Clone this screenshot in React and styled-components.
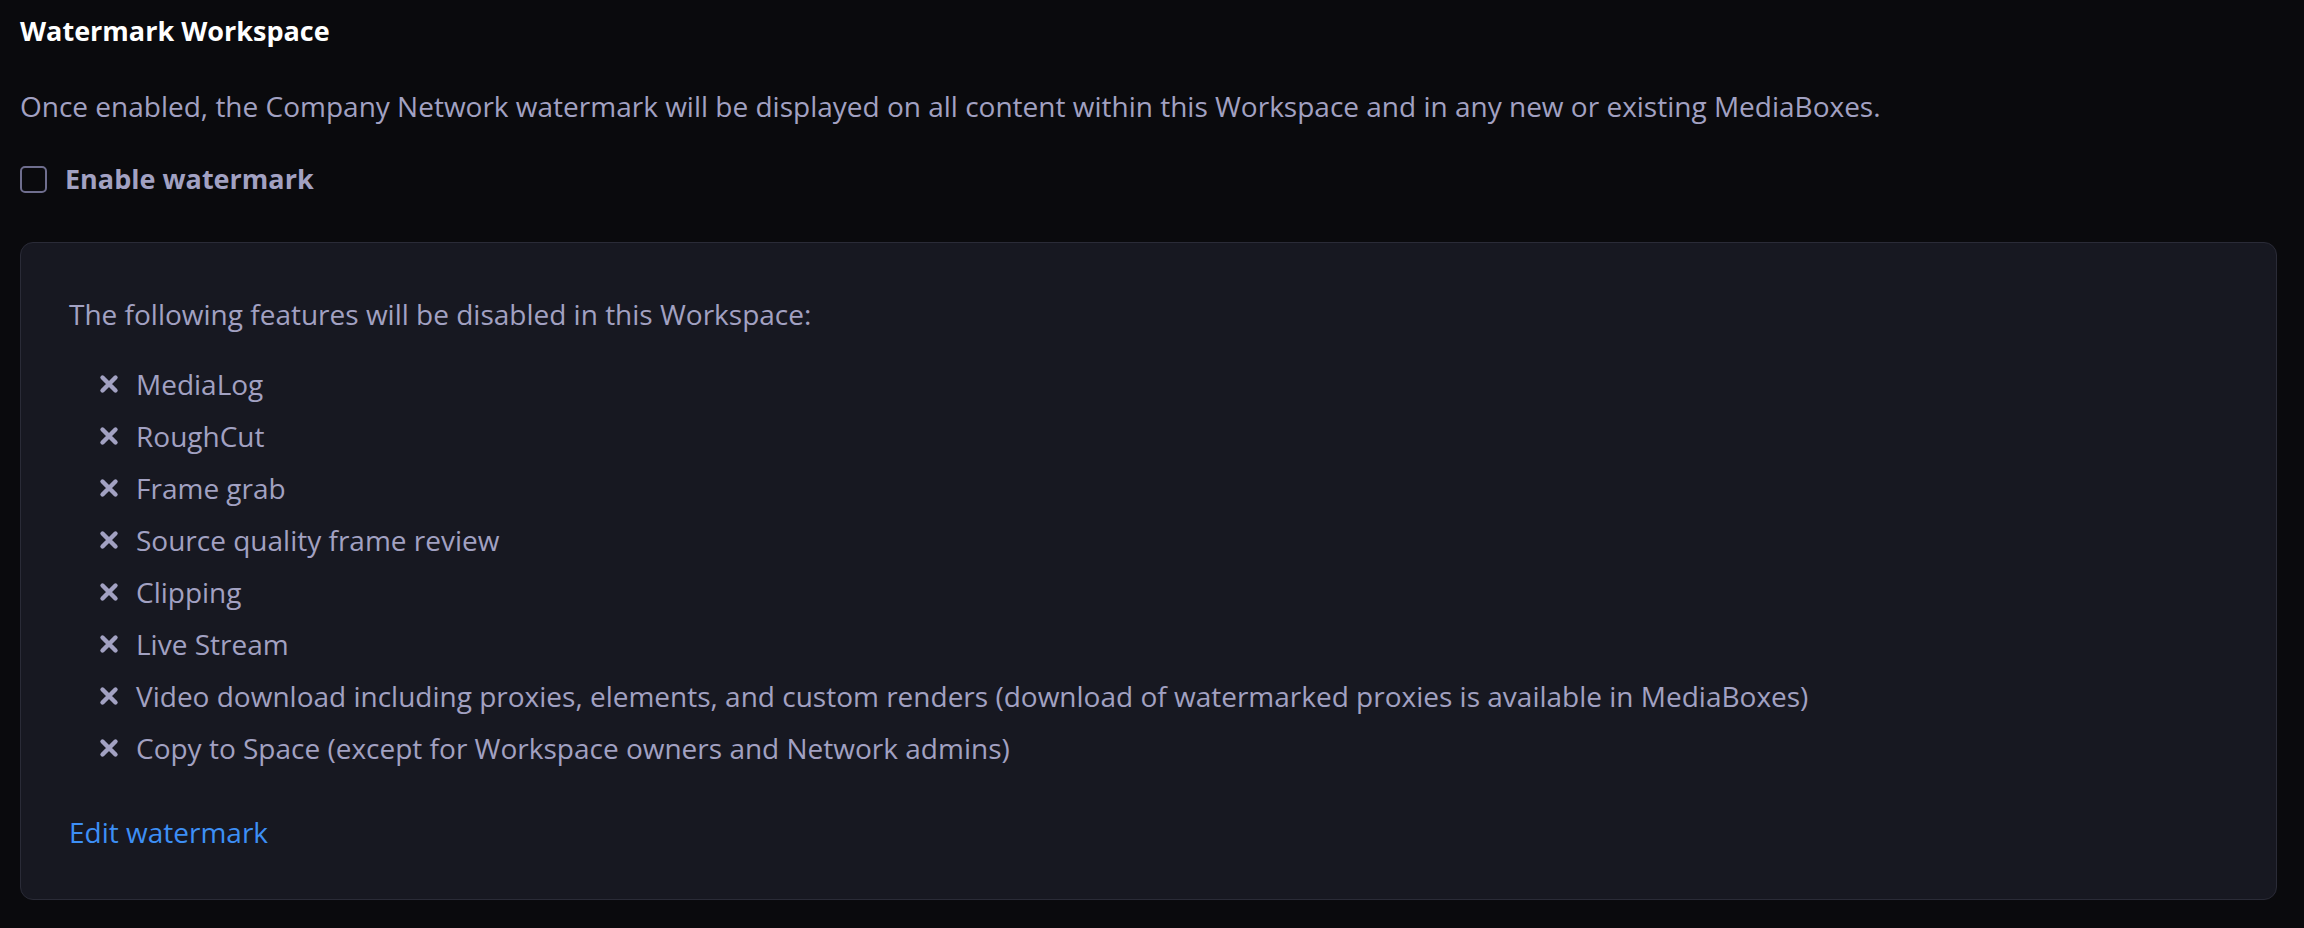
import React from 'react';
import styled, { createGlobalStyle } from 'styled-components';

const GlobalStyle = createGlobalStyle`
  html, body {
    margin: 0;
    padding: 0;
    background-color: #0a0a0d;
  }

  body {
    font-family: "Open Sans", "Noto Sans", sans-serif;
    -webkit-font-smoothing: antialiased;
  }
`;

const Page = styled.div`
  min-height: 928px;
  box-sizing: border-box;
  padding: 13px 27px 29px 20px;
  background-color: #0a0a0d;
  color: #a2a1c2;
`;

const Title = styled.h2`
  margin: 0;
  font-size: 27px;
  line-height: 36px;
  font-weight: 700;
  color: #ffffff;
`;

const Description = styled.p`
  margin: 39px 0 0;
  font-size: 28px;
  line-height: 36px;
  color: #a2a1c2;
`;

const CheckboxRow = styled.label`
  display: flex;
  align-items: center;
  gap: 18px;
  margin-top: 37px;
  height: 36px;
  cursor: pointer;
`;

const CheckboxBox = styled.span`
  width: 27px;
  height: 27px;
  box-sizing: border-box;
  border: 2px solid #6f6e8e;
  border-radius: 5px;
  background-color: transparent;
  flex-shrink: 0;
`;

const CheckboxLabel = styled.span`
  font-size: 27px;
  line-height: 36px;
  font-weight: 700;
  color: #a2a1c2;
`;

const Card = styled.div`
  margin-top: 45px;
  padding: 53px 48px 49px;
  background-color: #171821;
  border: 1px solid #2a2b37;
  border-radius: 13px;
`;

const Intro = styled.p`
  margin: 0;
  font-size: 28px;
  line-height: 36px;
  color: #a2a1c2;
`;

const FeatureList = styled.ul`
  list-style: none;
  margin: 34px 0 0;
  padding: 0 0 0 30px;
  display: flex;
  flex-direction: column;
  gap: 16px;
`;

const FeatureItem = styled.li`
  display: flex;
  align-items: center;
  gap: 17px;
  font-size: 28px;
  line-height: 36px;
  color: #a2a1c2;
`;

const EditLink = styled.a`
  display: inline-block;
  margin-top: 48px;
  font-size: 28px;
  line-height: 36px;
  color: #3d8ff5;
  text-decoration: none;
  cursor: pointer;
`;

const CrossIcon = () => (
  <svg width="20" height="20" viewBox="0 0 20 20" aria-hidden="true">
    <path
      d="M3.5 3.5 L16.5 16.5 M16.5 3.5 L3.5 16.5"
      stroke="currentColor"
      strokeWidth="4.4"
      strokeLinecap="round"
      fill="none"
    />
  </svg>
);

const features = [
  'MediaLog',
  'RoughCut',
  'Frame grab',
  'Source quality frame review',
  'Clipping',
  'Live Stream',
  'Video download including proxies, elements, and custom renders (download of watermarked proxies is available in MediaBoxes)',
  'Copy to Space (except for Workspace owners and Network admins)',
];

const App = () => (
  <>
    <GlobalStyle />
    <Page>
      <Title>Watermark Workspace</Title>
      <Description>
        Once enabled, the Company Network watermark will be displayed on all content within this Workspace and in any new or existing MediaBoxes.
      </Description>
      <CheckboxRow>
        <CheckboxBox />
        <CheckboxLabel>Enable watermark</CheckboxLabel>
      </CheckboxRow>
      <Card>
        <Intro>The following features will be disabled in this Workspace:</Intro>
        <FeatureList>
          {features.map(feature => (
            <FeatureItem key={feature}>
              <CrossIcon />
              {feature}
            </FeatureItem>
          ))}
        </FeatureList>
        <EditLink>Edit watermark</EditLink>
      </Card>
    </Page>
  </>
);

export default App;
